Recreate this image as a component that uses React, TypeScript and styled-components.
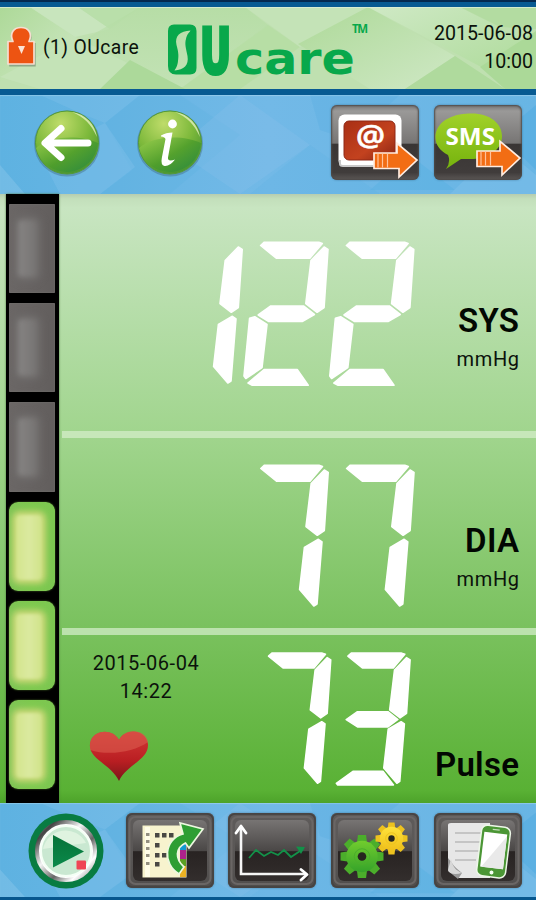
import React from "react";
import styled, { createGlobalStyle } from "styled-components";

const GlobalStyle = createGlobalStyle`
  * { box-sizing: border-box; }
  body { margin: 0; background: #0a5a93; font-family: Roboto, "Liberation Sans", sans-serif; }
`;

const Screen = styled.div`
  width: 536px;
  height: 900px;
  display: flex;
  flex-direction: column;
  overflow: hidden;
  color: #0b120b;
`;

const Header = styled.header`
  position: relative;
  isolation: isolate;
  height: 95px;
  flex: none;
  display: grid;
  grid-template-columns: 160px 220px 1fr;
  border-top: 7px solid #075a92;
  border-bottom: 6px solid #075a92;
  background: #bfe0b0;
  &::before {
    content: "";
    position: absolute;
    top: -7px;
    left: 0;
    right: 0;
    height: 2px;
    background: #04294f;
  }
`;

const Backdrop = styled.svg`
  position: absolute;
  inset: 0;
  width: 100%;
  height: 100%;
  z-index: -1;
`;

const User = styled.div`
  display: flex;
  align-items: center;
  gap: 5px;
  padding: 0 0 2px 6px;
  font-size: 19.3px;
  letter-spacing: 0.42px;
  white-space: nowrap;
`;

const Clock = styled.div`
  padding: 13px 3px 0 0;
  text-align: right;
  font-size: 19.6px;
  line-height: 28px;
`;

const Bar = styled.nav<{ $bottom?: boolean }>`
  position: relative;
  isolation: isolate;
  flex: none;
  display: flex;
  height: ${(p) => (p.$bottom ? 97 : 99)}px;
  padding: ${(p) => (p.$bottom ? "10px 14px 0 28px" : "10px 14px 0 34px")};
  gap: ${(p) => (p.$bottom ? 15 : 37)}px;
  background: linear-gradient(90deg, #5eb2e1, #72b9e7 50%, #68b5e4);
  border-bottom: ${(p) => (p.$bottom ? "3px solid #07578e" : "0")};
  box-shadow: inset 0 1px 1px rgba(255, 255, 255, 0.25);
`;

const RoundButton = styled.button<{ $top: number; $size: number }>`
  width: ${(p) => p.$size}px;
  height: ${(p) => p.$size}px;
  margin: ${(p) => p.$top}px 0 0;
  padding: 0;
  border: 0;
  border-radius: 50%;
  background: none;
  flex: none;
  svg { display: block; overflow: visible; }
`;

const ToolGroup = styled.div`
  display: flex;
  gap: 14.8px;
  margin-left: auto;
`;

const Tile = styled.button<{ $framed?: boolean }>`
  width: 88px;
  height: 75px;
  padding: 0;
  flex: none;
  border: 0;
  border-radius: 6px;
  overflow: hidden;
  background: ${(p) =>
    p.$framed
      ? "linear-gradient(#5e5b5a, #5a5756 50%, #504d4c)"
      : "linear-gradient(#777575, #9a9998 8%, #777574 51%, #393534 52%, #403c3b 90%, #5c5856)"};
  box-shadow: inset 0 0 2px 1px #4d4a49, 0 0 2px rgba(30, 60, 80, 0.5);
  svg { display: block; }
`;

const Main = styled.main`
  position: relative;
  height: 609px;
  flex: none;
  display: grid;
  grid-template-columns: 53px 474px;
  column-gap: 3px;
  padding-left: 6px;
  background: linear-gradient(#b6cdb0 0, #c3dfbb 5px, #c8e5c1 14px, #a1d58e 39%, #79c15d 72%, #59b134 98%, #4da32a 100%);
`;

const Gauge = styled.div`
  display: flex;
  flex-direction: column;
  gap: 10px;
  padding: 10px 4px 0 3px;
  background: #000;
  box-shadow: 0 0 2px #4b793f;
`;

const Led = styled.div<{ $lit?: boolean }>`
  height: 89.2px;
  position: relative;
  flex: none;
  border-radius: ${(p) => (p.$lit ? "9px" : "1px")};
  background: ${(p) =>
    p.$lit
      ? "linear-gradient(90deg, #7fc455, #7ec94f 50%, #7cc651)"
      : "linear-gradient(90deg, #6b6766, #625e5d)"};
  box-shadow: ${(p) => (p.$lit ? "0 0 2px #4c7427" : "inset 0 0 2px #787574")};
  overflow: hidden;
  &::after {
    content: "";
    position: absolute;
    inset: ${(p) => (p.$lit ? "13px 13px 11px 7px" : "16px 18px 16px 9px")};
    border-radius: 4px;
    filter: blur(${(p) => (p.$lit ? 1.5 : 2.5)}px);
    background: ${(p) =>
      p.$lit
        ? "linear-gradient(90deg, #d3e58c, #dbe9a0 50%, #d0e389)"
        : "linear-gradient(90deg, #868483, #767372)"};
    box-shadow: 0 0 5px 4px ${(p) => (p.$lit ? "#c8d776" : "#6f6c6b")};
  }
`;

const Readings = styled.div`
  display: grid;
  grid-template-rows: 237px 7px 190px 7px 168px;
`;

const Divider = styled.div`
  background: rgba(214, 239, 204, 0.72);
`;

const Reading = styled.section<{ $top: number }>`
  display: grid;
  grid-template-columns: 354px 1fr;
  padding-top: ${(p) => p.$top}px;
  padding-right: 17px;
  align-items: start;
`;

const Digits = styled.svg`
  display: block;
  justify-self: end;
  overflow: visible;
  fill: #fff;
  stroke: #fff;
  stroke-width: 1.6;
  stroke-linejoin: round;
`;

const Label = styled.div<{ $top: number }>`
  padding-top: ${(p) => p.$top}px;
  text-align: right;
  white-space: nowrap;
`;

const Name = styled.div`
  font-size: 33px;
  line-height: 38px;
  font-weight: 600;
  letter-spacing: 0.3px;
  margin-right: -0.3px;
  color: #020702;
`;

const Unit = styled.div`
  font-size: 20px;
  line-height: 26px;
  margin-top: 6px;
  letter-spacing: 0.6px;
  margin-right: -0.6px;
`;

const PulseBody = styled.div`
  display: flex;
  justify-content: space-between;
  padding-right: 4.5px;
`;

const Measured = styled.div`
  width: 112px;
  margin: -3px 0 0 28px;
  display: flex;
  flex-direction: column;
  align-items: center;
  text-align: center;
  font-size: 20px;
  line-height: 28px;
  letter-spacing: 0.55px;
  white-space: nowrap;
`;

const Heart = styled.svg`
  display: block;
  align-self: flex-start;
  margin-top: 25px;
  margin-left: -1px;
`;

// Outline of each LCD segment inside an 87 x 145 cell.
const SEG = {
  a: "17.8,4.5 21.5,1.2 76,1.2 79.5,2.5 67,17.2 33.5,17.2",
  b: "81.3,6 85.2,8.4 81.3,66.5 74.3,71.3 63,62.5 68.2,19.5",
  c: "75.4,75.3 79,77.8 74,140 70.8,142 56.6,125.5 61.4,83.5",
  d: "21.3,128.5 54.4,128.5 65.4,144.3 9.5,144.3 5.2,142",
  e: "12,75.8 24.2,83.4 19.2,126.7 3,137.5 1.2,135 6.8,77.3",
  g: "28,65 60.7,65 71.6,73.5 59.4,80.5 26,80.5 15.4,74",
  g3: "16,73 28.2,64.5 61.2,64.5 72,73 61.2,81 28.2,81",
  d3: "5.3,142 23.3,129 55.8,129 67.2,143.8 6.8,143.8",
};
const GLYPH: Record<string, (keyof typeof SEG)[]> = {
  "1": ["b", "c"],
  "2": ["a", "b", "g", "e", "d"],
  "3": ["a", "b", "g3", "c", "d3"],
  "7": ["a", "b", "c"],
};

const Lcd = ({ value, scale = 1 }: { value: string; scale?: number }) => {
  const w = (value.length - 1) * 85.8 + 87;
  return (
    <Digits role="img" aria-label={value} width={w * scale} height={145 * scale} viewBox={`0 0 ${w} 145`}>
      {value.split("").map((ch, i) => (
        <g key={i} transform={`translate(${i * 85.8} 0)`}>
          {GLYPH[ch].map((s) => <polygon key={s} points={SEG[s]} />)}
        </g>
      ))}
    </Digits>
  );
};

const HeaderPattern = () => (
  <Backdrop viewBox="0 0 536 82" preserveAspectRatio="none">
    <defs>
      <linearGradient id="hl" x2="1" y2="1"><stop stopColor="#add998" /><stop offset="1" stopColor="#cfe8c5" /></linearGradient>
      <linearGradient id="hd" x2="1" y2="1"><stop stopColor="#cfe9c5" /><stop offset="1" stopColor="#acda98" /></linearGradient>
      <linearGradient id="hm" x2="0" y2="1"><stop stopColor="#b3dca2" /><stop offset="1" stopColor="#c4e3b7" /></linearGradient>
    </defs>
    <path d="M0 0H30L75 30 0 75Z" fill="url(#hl)" />
    <path d="M30 0H78L110 22 75 30Z" fill="#c8e5bd" />
    <path d="M78 0H140L110 22Z" fill="#b9dfaa" />
    <path d="M140 0H245L268 18 180 82 80 35Z" fill="url(#hm)" opacity=".7" />
    <path d="M75 30 180 82H40L0 70Z" fill="#c8e5bd" opacity=".6" />
    <path d="M130 53 185 82H100Z" fill="#acd99a" />
    <path d="M268 18 300 40 240 82H180Z" fill="#a8d993" opacity=".35" />
    <path d="M245 0H370L300 40Z" fill="#c4e3b7" />
    <path d="M368 0 455 49 405 82H370L298 37Z" fill="url(#hl)" />
    <path d="M368 0H460L536 40V60L500 70Z" fill="url(#hd)" />
    <path d="M460 0H536V22L500 20Z" fill="#b3dca1" />
    <path d="M455 49 505 82H405Z" fill="#afda9d" />
    <path d="M480 60 536 24V82H505Z" fill="#abd998" />
    <path d="M0 .5H536" stroke="#dcefd8" opacity=".8" />
  </Backdrop>
);

const BlueLattice = () => (
  <Backdrop viewBox="0 0 536 99" preserveAspectRatio="none">
    <path d="M40 0H140L105 28 80 18Z" fill="#85c5ec" opacity=".3" />
    <path d="M140 0 105 28 132 75 100 99H170L240 40 180 0Z" fill="#4ea7dc" opacity=".14" />
    <path d="M105 28 135 72 100 99H60L40 60Z" fill="#8cc5ed" opacity=".28" />
    <path d="M240 0 310 50 240 99 175 55Z" fill="#93c6ec" opacity=".22" />
    <path d="M0 70 25 99H0Z" fill="#9ed2f0" opacity=".3" />
    <path d="M310 0H400L350 45 320 35Z" fill="#4ca9df" opacity=".22" />
    <path d="M310 50 380 99H250Z" fill="#4ca9df" opacity=".12" />
    <path d="M410 60 455 95H370Z" fill="#55aee2" opacity=".4" />
    <path d="M536 10V75L500 40Z" fill="#49a7df" opacity=".35" />
    <path d="M500 50 536 80V99H450Z" fill="#92caef" opacity=".25" />
  </Backdrop>
);

const Lock = () => (
  <svg width="32" height="42" viewBox="0 0 32 42">
    <path d="M3 15.500H7C3 7 8 1.500 15 1.500S27 7 23 15.500h5.500V39H2V15.500Z" transform="translate(1.200 1.400)" fill="#789075" opacity=".7" />
    <path d="M3 15.500H7C3 7 8 1.500 15 1.500S27 7 23 15.500h5V38H2V15.500Z" fill="#ed5412" stroke="#f6ddd0" strokeWidth="1.700" strokeLinejoin="round" />
    <path d="M12 20h7l-3.500 8Z" fill="#fbe3d6" />
  </svg>
);

const Logo = () => (
  <svg width="220" height="82" viewBox="160 7 220 82" role="img" aria-label="OUcare">
    <path fillRule="evenodd" fill="#08a84b" d="M174 24.500H190Q196.500 24.500 196.500 31V68Q196.500 74.500 190 74.500H176Q168 74.500 168 66V31Q168 24.500 174 24.500ZM190.500 30.500C180 31 174.500 36 176.500 45C178 51 179 54 178 61C177.500 66 176 68 174.500 70.500C184 70 189 65 187.500 56C186 48 184.500 44 186 39C187 34 189 33 190.500 30.500Z" />
    <g fill="#08a84b" stroke="#08a84b" fontFamily="DejaVu Sans, sans-serif" fontWeight="700">
      <text x="0" y="0" transform="translate(200 72.500) scale(.62 1)" fontSize="62" strokeWidth="4">U</text>
      <text x="235" y="73.800" fontSize="45" textLength="120" lengthAdjust="spacingAndGlyphs" stroke="none">care</text>
    </g>
    <text x="352" y="33" fill="#08a84b" fontFamily="Open Sans, sans-serif" fontWeight="700" fontSize="11.500" textLength="16">TM</text>
  </svg>
);

const GlossBall = ({ children, id }: { children: React.ReactNode; id: string }) => (
  <svg width="66" height="66" viewBox="0 0 66 66">
    <defs>
      <radialGradient id={id} cx=".4" cy=".2" r=".85">
        <stop stopColor="#bfdc6a" /><stop offset=".55" stopColor="#7db93b" /><stop offset="1" stopColor="#43912f" />
      </radialGradient>
      <linearGradient id={id + "b"} x1="0" y1=".3" x2=".8" y2="1"><stop stopColor="#86c244" /><stop offset=".5" stopColor="#4b9c2a" /><stop offset="1" stopColor="#2c8b40" /></linearGradient>
    </defs>
    <circle cx="33" cy="33.500" r="33" fill="#46768d" opacity=".5" />
    <circle cx="33" cy="32.500" r="31.500" fill={`url(#${id})`} stroke="#549a36" />
    <path d="M2 38C17 25 47 25 64 33A31.500 31.500 0 0 1 2 38Z" fill={`url(#${id}b)`} opacity=".8" />
    <path d="M38 2C52 4 61 15 63 27C57 14 50 7 38 2Z" fill="#e8f3c7" opacity=".75" />
    {children}
  </svg>
);

const SendArrow = ({ y }: { y: number }) => (
  <g transform={`translate(42 ${y})`}>
    <path d="M1 10.500H24V.800L44 17.500 26 34.500V26H1Z" fill="#f26d14" stroke="#ffece0" strokeWidth="1.700" />
    <path d="M5 11v14M9.500 11v14M14.500 11v14" stroke="#ffc19a" strokeWidth="1.200" />
  </g>
);

const MailIcon = () => (
  <svg width="88" height="75" viewBox="0 0 88 75">
    <defs><linearGradient id="ml" x2="1" y2="1"><stop stopColor="#a92f15" /><stop offset=".6" stopColor="#c3421f" /><stop offset="1" stopColor="#872413" /></linearGradient></defs>
    <rect x="7.500" y="9.500" width="63" height="52" rx="6" fill="#fff" />
    <path d="M9 55V59Q9 61 12 61H66Q70 61 70 56" fill="none" stroke="#c9c9c9" strokeWidth="2" />
    <rect x="13" y="16" width="51" height="39" rx="5" fill="url(#ml)" stroke="#8f2916" />
    <text x="25" y="41" fill="#fff" stroke="#fff" strokeWidth=".6" fontFamily="Open Sans, sans-serif" fontWeight="600" fontSize="28" textLength="29" lengthAdjust="spacingAndGlyphs">@</text>
    <SendArrow y={37.5} />
  </svg>
);

const SmsIcon = () => (
  <svg width="88" height="75" viewBox="0 0 88 75">
    <defs><linearGradient id="sm" x2="0" y2="1"><stop stopColor="#a1d129" /><stop offset="1" stopColor="#75b30d" /></linearGradient></defs>
    <path d="M35 8.500C55 7.500 68 18 68 31S56 53 39 54H27L12 64Q17 57 14 50C-3 42 -2 23 12 14.500Q22 8.500 35 8.500Z" fill="url(#sm)" />
    <text x="11.500" y="40" fill="#fff" fontFamily="Open Sans, sans-serif" fontWeight="700" fontSize="23.500" textLength="49.500" lengthAdjust="spacingAndGlyphs">SMS</text>
    <SendArrow y={35.5} />
  </svg>
);

const Framed = ({ children }: { children: React.ReactNode }) => (
  <svg width="88" height="75" viewBox="0 0 88 75">
    <defs><linearGradient id="fr" x2="0" y2="1"><stop stopColor="#777473" /><stop offset=".5" stopColor="#4b4847" /><stop offset=".52" stopColor="#282322" /><stop offset="1" stopColor="#332e2d" /></linearGradient></defs>
    <rect x="1" y="1" width="86" height="73" rx="6" fill="none" stroke="#464342" strokeWidth="1.500" />
    <rect x="3.500" y="4" width="81" height="67" rx="6" fill="none" stroke="#6a6665" strokeWidth="2" />
    <rect x="7" y="7" width="74" height="61" rx="6" fill="url(#fr)" />
    {children}
  </svg>
);

const PlayIcon = () => (
  <svg width="76" height="76" viewBox="0 0 76 76">
    <defs>
      <linearGradient id="pl" x2="1" y2="1"><stop stopColor="#aaa" /><stop offset=".15" stopColor="#444" /><stop offset=".4" stopColor="#f5f5f5" /><stop offset=".62" stopColor="#666" /><stop offset=".8" stopColor="#fff" /><stop offset="1" stopColor="#777" /></linearGradient>
      <linearGradient id="ptri" x2="0" y2="1"><stop stopColor="#067238" /><stop offset="1" stopColor="#0a894a" /></linearGradient>
    </defs>
    <circle cx="38" cy="38" r="37.500" fill="#087c42" />
    <circle cx="38" cy="38" r="29" fill="#fff" stroke="url(#pl)" strokeWidth="4" />
    <circle cx="38" cy="38" r="25" fill="#c9e8d1" stroke="#f4fff5" strokeWidth="2" />
    <path d="M15 36A23 23 0 0 1 58 30C43 32 28 34 15 36Z" fill="#dff3e0" />
    <path d="M25 22 56 38.500 25 54.500Z" fill="url(#ptri)" />
    <rect x="48.500" y="47.500" width="9.500" height="9" rx="1" fill="#ef4455" />
  </svg>
);

const CALENDAR_MARKS = [[20, 20], [29, 20], [36, 20], [43, 20], [20, 27], [29, 30], [20, 34], [29, 40], [36, 40], [20, 41], [20, 49], [29, 49]];

const ExportIcon = () => (
  <Framed>
    <rect x="16.500" y="12.500" width="44" height="52" fill="#f7f3ce" />
    <path d="M19 14H24V64H19Z" fill="#fffde8" />
    {CALENDAR_MARKS.map(([x, y]) => (
      <rect key={`${x}-${y}`} x={x} y={y} width={x === 20 ? 3.5 : 4.5} height={x === 20 ? 3 : 4.5} fill={x === 20 ? "#938f80" : "#494843"} />
    ))}
    <path d="M54 31h6v8h-6Z" fill="#129bd4" />
    <path d="M54 37h6v10h-6Z" fill="#ad238c" />
    <path d="M54 46h6v7h-6Z" fill="#5ca022" />
    <path d="M54 53h6v11h-6Z" fill="#ecb223" />
    <path d="M53 61C36 51 38 26 57 21L54 10 77 16 63 35 59.500 30C49 35 49 46 58 54Z" fill="#2e9e33" stroke="#ecf7df" strokeWidth="1.700" />
  </Framed>
);

const ChartIcon = () => (
  <Framed>
    <path d="M13 15V61H78" fill="none" stroke="#f6f6f6" strokeWidth="2.600" />
    <path d="M8 20 13 13 18 20M73 56.500 79 61.500 73 67" fill="none" stroke="#fff" strokeWidth="2.800" strokeLinecap="round" strokeLinejoin="round" />
    <path d="M21 45 28 37 36 43 43 39 50 42 56 37 63 44 75 36" fill="none" stroke="#139149" strokeWidth="1.800" />
    <path d="M68 33.500 77 34 73 41Z" fill="#139149" />
  </Framed>
);

const Gear = ({ x, y, r, fill, edge }: { x: number; y: number; r: number; fill: string; edge: string }) => (
  <g transform={`translate(${x} ${y})`}>
    {Array.from({ length: 8 }, (_, i) => (
      <path key={i} transform={`rotate(${i * 45})`} d={`M${-r * 0.24} ${-r * 0.6}L${-r * 0.19} ${-r}H${r * 0.19}L${r * 0.24} ${-r * 0.6}Z`} fill={edge} />
    ))}
    <circle r={r * 0.73} fill={fill} />
    <circle r={r * 0.36} fill="none" stroke={edge} strokeWidth="1" />
    <circle r={r * 0.2} fill="#26251f" />
  </g>
);

const GearsIcon = () => (
  <Framed>
    <defs>
      <linearGradient id="gg" x2="0" y2="1"><stop stopColor="#71cc2e" /><stop offset="1" stopColor="#35a32a" /></linearGradient>
      <linearGradient id="gy" x2="0" y2="1"><stop stopColor="#ffe23b" /><stop offset="1" stopColor="#efc01c" /></linearGradient>
    </defs>
    <Gear x={31} y={43.5} r={21.500} fill="url(#gg)" edge="#4bae2b" />
    <Gear x={60.5} y={25.5} r={16} fill="url(#gy)" edge="#edc21f" />
  </Framed>
);

const ReportIcon = () => (
  <Framed>
    <path d="M14 12Q14 10 17 10H56V65H25L14 56Z" fill="#e7e7e7" />
    <path d="M21 20H50M21 29H49M21 38H45M21 47H42" stroke="#bbb" strokeWidth="1.300" />
    <path d="M14 45C18 50 20 54 28 60L24 66 14 58Z" fill="#999" />
    <path d="M17 46C19 55 22 57 28 60C21 62 15 61 14 57Z" fill="#d8d8d8" />
    <g transform="rotate(7 59 39)">
      <rect x="45" y="13" width="29" height="51" rx="6" fill="#4b9635" stroke="#edf7e8" strokeWidth="1.500" />
      <path d="M48 20H71V55H48Z" fill="#fff" />
      <path d="M71 22V55H49Z" fill="#e9e9e9" />
      <path d="M56 16.500H63" stroke="#c4ddbc" strokeWidth="1.300" />
      <circle cx="60" cy="59.500" r="2" fill="#f4fff1" />
    </g>
  </Framed>
);

export default function App() {
  return (
    <>
      <GlobalStyle />
      <Screen>
        <Header>
          <HeaderPattern />
          <User><Lock />(1) OUcare</User>
          <Logo />
          <Clock>2015-06-08<br />10:00</Clock>
        </Header>

        <Bar>
          <BlueLattice />
          <RoundButton $top={5} $size={66} aria-label="Back">
            <GlossBall id="back">
              <path d="M54 33H13M27 18.500 11 33 27 47.500" fill="none" stroke="#fff" strokeWidth="7" strokeLinecap="round" strokeLinejoin="round" />
            </GlossBall>
          </RoundButton>
          <RoundButton $top={5} $size={66} aria-label="Information">
            <GlossBall id="info">
              <circle cx="35.500" cy="14" r="4.400" fill="#fff" />
              <path d="M24 25.500Q29 22.500 35.500 22.500L31 47.500Q30.500 52 38 49.500Q33 56.500 27.500 56Q23.500 55 24.800 48L28.500 29Q27.500 26.500 24 26.500Z" fill="#fff" />
            </GlossBall>
          </RoundButton>
          <ToolGroup>
            <Tile aria-label="Send mail"><MailIcon /></Tile>
            <Tile aria-label="Send SMS"><SmsIcon /></Tile>
          </ToolGroup>
        </Bar>

        <Main>
          <Gauge>
            <Led /><Led /><Led />
            <Led $lit /><Led $lit /><Led $lit />
          </Gauge>
          <Readings>
            <Reading $top={47}>
              <Lcd value="122" />
              <Label $top={61}><Name>SYS</Name><Unit>mmHg</Unit></Label>
            </Reading>
            <Divider />
            <Reading $top={26}>
              <Lcd value="77" />
              <Label $top={58}><Name>DIA</Name><Unit>mmHg</Unit></Label>
            </Reading>
            <Divider />
            <Reading $top={17}>
              <PulseBody>
                <Measured>
                  <span>2015-06-04<br />14:22</span>
                  <Heart width="60" height="52" viewBox="0 0 60 52">
                    <defs>
                      <linearGradient id="ht" x2="0" y2="1"><stop stopColor="#d43a36" /><stop offset=".6" stopColor="#b91e22" /><stop offset="1" stopColor="#7a171a" /></linearGradient>
                    </defs>
                    <path d="M30 10C24-2 3-1 1 14C-1 29 22 34 30 51C37 35 60 30 59 14C57-1 36-3 30 10Z" fill="url(#ht)" />
                    <path d="M30 10C24-2 3-1 1 14V20C20 26 45 22 59 12C57-1 36-3 30 10Z" fill="#d8574b" opacity=".65" />
                  </Heart>
                </Measured>
                <Lcd value="73" scale={0.925} />
              </PulseBody>
              <Label $top={94}><Name>Pulse</Name></Label>
            </Reading>
          </Readings>
        </Main>

        <Bar $bottom>
          <BlueLattice />
          <RoundButton $top={0} $size={76} aria-label="Measure"><PlayIcon /></RoundButton>
          <ToolGroup>
            <Tile $framed aria-label="Export"><ExportIcon /></Tile>
            <Tile $framed aria-label="Chart"><ChartIcon /></Tile>
            <Tile $framed aria-label="Settings"><GearsIcon /></Tile>
            <Tile $framed aria-label="Report"><ReportIcon /></Tile>
          </ToolGroup>
        </Bar>
      </Screen>
    </>
  );
}
